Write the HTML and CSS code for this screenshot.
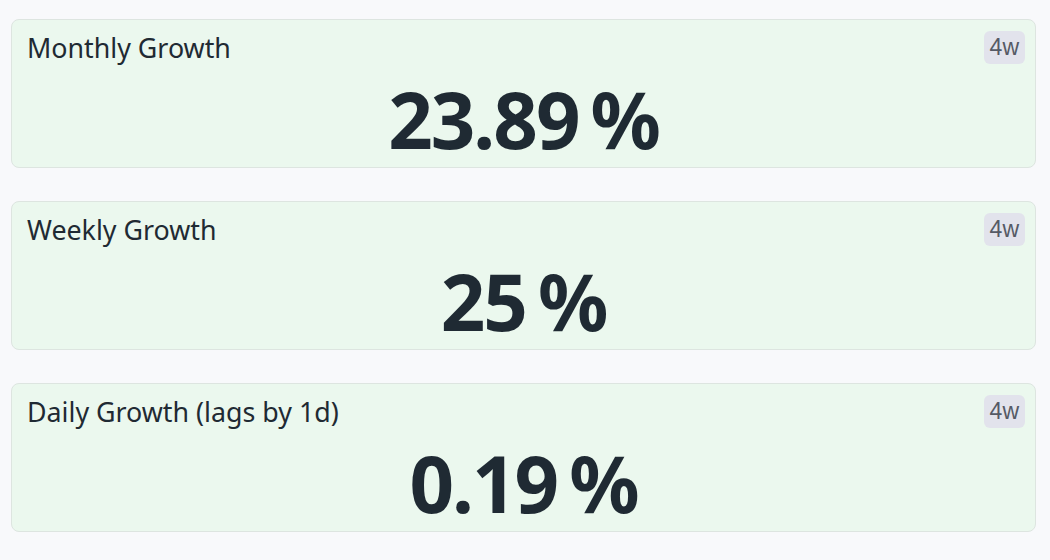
FILE: index.html
```html
<!DOCTYPE html>
<html lang="en">

<head>
    <meta charset="UTF-8">
    <meta name="viewport" content="width=device-width, initial-scale=1.0">
    <title>Growth</title>
    <link rel="stylesheet" href="styles.css">
</head>

<body>
    <div id="panels">
        <div class="stat">
            <div class="stat-head">
                <span class="stat-title">Monthly Growth</span>
                <span class="badge">4w</span>
            </div>
            <div class="stat-value">23.89<span class="unit">%</span></div>
        </div>
        <div class="stat">
            <div class="stat-head">
                <span class="stat-title">Weekly Growth</span>
                <span class="badge">4w</span>
            </div>
            <div class="stat-value">25<span class="unit">%</span></div>
        </div>
        <div class="stat">
            <div class="stat-head">
                <span class="stat-title">Daily Growth (lags by 1d)</span>
                <span class="badge">4w</span>
            </div>
            <div class="stat-value">0.19<span class="unit">%</span></div>
        </div>
    </div>
</body>

</html>
```

FILE: styles.css
```css
html,
body {
    height: 100%;
    margin: 0;
}

body {
    background: #f8f9fb;
    font-family: "Noto Sans", "Open Sans", sans-serif;
    color: #1f2a33;
}

#panels {
    display: flex;
    flex-direction: column;
    gap: 33px;
    padding: 19px 14px 0 11px;
}

.stat {
    background: #ebf8ee;
    border: 1px solid #dde5e0;
    border-radius: 8px;
    box-sizing: border-box;
    height: 149px;
    display: flex;
    flex-direction: column;
}

.stat-head {
    display: flex;
    justify-content: space-between;
    align-items: flex-start;
    padding: 11px 10px 0 15px;
}

.stat-title {
    font-size: 26.8px;
    line-height: 34px;
}

.badge {
    background: #e2e3ec;
    color: #555a65;
    font-family: "Liberation Sans", Arial, sans-serif;
    font-size: 23px;
    line-height: 33px;
    padding: 0 6px;
    border-radius: 6px;
}

.stat-value {
    text-align: center;
    font-size: 78px;
    font-weight: 700;
    line-height: 96px;
    letter-spacing: -2px;
    padding-top: 6px;
}

.stat-value .unit {
    margin-left: 12px;
}
```
